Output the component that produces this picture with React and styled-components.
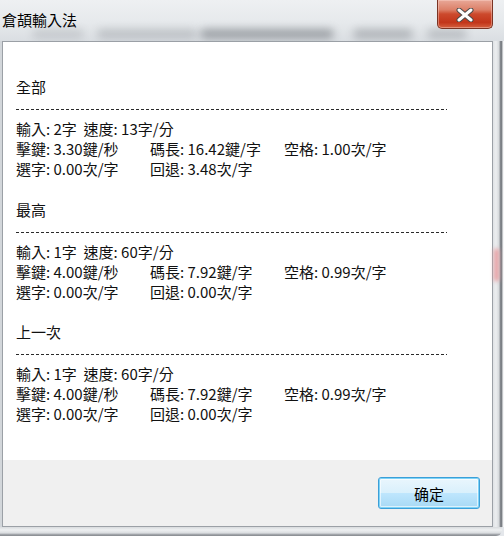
import styled, { createGlobalStyle } from "styled-components";

const GlobalStyle = createGlobalStyle`
  html, body {
    margin: 0;
    padding: 0;
    background: #e4e7eb;
  }
  * {
    box-sizing: border-box;
  }
`;

const sections = [
  {
    title: "全部",
    input: "輸入: 2字  速度: 13字/分",
    keys: "擊鍵: 3.30鍵/秒",
    length: "碼長: 16.42鍵/字",
    space: "空格: 1.00次/字",
    select: "選字: 0.00次/字",
    back: "回退: 3.48次/字",
  },
  {
    title: "最高",
    input: "輸入: 1字  速度: 60字/分",
    keys: "擊鍵: 4.00鍵/秒",
    length: "碼長: 7.92鍵/字",
    space: "空格: 0.99次/字",
    select: "選字: 0.00次/字",
    back: "回退: 0.00次/字",
  },
  {
    title: "上一次",
    input: "輸入: 1字  速度: 60字/分",
    keys: "擊鍵: 4.00鍵/秒",
    length: "碼長: 7.92鍵/字",
    space: "空格: 0.99次/字",
    select: "選字: 0.00次/字",
    back: "回退: 0.00次/字",
  },
];

// blurred taskbar/window text seen through the glass title bar
const blurs = [
  { left: 32, width: 52, tone: 0.15 },
  { left: 97, width: 100, tone: 0.2 },
  { left: 200, width: 134, tone: 0.4 },
  { left: 353, width: 60, tone: 0.28 },
  { left: 427, width: 40, tone: 0.22 },
];

export default function App() {
  return (
    <>
      <GlobalStyle />
      <Window>
        <TitleBar>
          {blurs.map((b) => (
            <Blur
              key={b.left}
              style={{ left: b.left, width: b.width, opacity: b.tone }}
            />
          ))}
          <Title>倉頡輸入法</Title>
          <CloseButton aria-label="close">
            <svg width="20" height="14" viewBox="0 0 20 14">
              <path
                d="M4 2 L16 12 M16 2 L4 12"
                stroke="#4a4a4a"
                strokeWidth="5"
                strokeLinecap="round"
              />
              <path
                d="M4 2 L16 12 M16 2 L4 12"
                stroke="#ffffff"
                strokeWidth="3"
                strokeLinecap="round"
              />
            </svg>
          </CloseButton>
        </TitleBar>
        <Middle>
          <LeftFrame />
          <Client>
            <Content>
              {sections.map((s) => (
                <Section key={s.title}>
                  <Heading>{s.title}</Heading>
                  <Rule />
                  <Stats>
                    <Wide>{s.input}</Wide>
                    <span>{s.keys}</span>
                    <span>{s.length}</span>
                    <span>{s.space}</span>
                    <span>{s.select}</span>
                    <span>{s.back}</span>
                  </Stats>
                </Section>
              ))}
            </Content>
            <Footer>
              <OkButton>确定</OkButton>
            </Footer>
          </Client>
          <RightFrame />
        </Middle>
        <BottomFrame />
      </Window>
    </>
  );
}

const Window = styled.div`
  width: 504px;
  height: 536px;
  display: flex;
  flex-direction: column;
  font-family: "Noto Sans CJK TC", "Noto Sans", sans-serif;
  color: #111;
  overflow: hidden;
`;

const TitleBar = styled.div`
  position: relative;
  height: 41px;
  display: flex;
  align-items: flex-start;
  justify-content: space-between;
  background: linear-gradient(180deg, #eef0f2 0%, #e6e9ec 55%, #dadee2 100%);
  overflow: hidden;
`;

const Blur = styled.div`
  position: absolute;
  top: 29px;
  height: 10px;
  background: #3a3f46;
  border-radius: 5px;
  filter: blur(4px);
`;

const Title = styled.div`
  position: relative;
  margin-top: 10px;
  padding-left: 2px;
  font-size: 15px;
  line-height: 20px;
  color: #000;
`;

const CloseButton = styled.div`
  position: relative;
  width: 56px;
  height: 29px;
  margin-right: 11px;
  display: flex;
  align-items: center;
  justify-content: center;
  border: 1px solid #7a3323;
  border-top: none;
  border-radius: 0 0 5px 5px;
  background: linear-gradient(
    180deg,
    #e8a898 0%,
    #dc8068 35%,
    #cc4a2d 50%,
    #c2351a 80%,
    #d5603f 100%
  );
  box-shadow: inset 0 0 0 1px rgba(255, 220, 210, 0.4);

  svg {
    margin-top: 2px;
  }
`;

const Middle = styled.div`
  display: flex;
  height: 486px;
`;

const LeftFrame = styled.div`
  width: 2px;
  background: #d2d6da;
`;

const RightFrame = styled.div`
  position: relative;
  width: 11px;
  background: linear-gradient(
    90deg,
    #dfe2e5 0px,
    #eceef0 3px,
    #d6d9dc 6px,
    #9a9ea3 7px,
    #6b6f75 8px,
    #8c9095 9px,
    #f4f5f6 10px
  );

  &::after {
    content: "";
    position: absolute;
    left: 1px;
    top: 208px;
    width: 5px;
    height: 32px;
    background: #e89a9e;
    filter: blur(2px);
  }
`;

const BottomFrame = styled.div`
  height: 9px;
  margin-right: 2px;
  border-radius: 0 0 6px 0;
  background: linear-gradient(180deg, #d8dbde 0px, #eef0f1 3px, #dadde0 6px, #8e9297 8px);
`;

const Client = styled.div`
  width: 491px;
  display: flex;
  flex-direction: column;
  border: 1px solid #9ba0a6;
  background: #ffffff;
`;

const Content = styled.div`
  flex: 1;
  padding: 35px 0 0 13px;
  font-size: 15px;
  line-height: 20px;
`;

const Section = styled.div`
  margin-bottom: 20.5px;
`;

const Heading = styled.div`
  height: 20px;
`;

const Rule = styled.div`
  width: 431px;
  height: 1px;
  margin: 12px 0 9px;
  background: repeating-linear-gradient(
    90deg,
    #2a2a2a 0px,
    #2a2a2a 3px,
    transparent 3px,
    transparent 5px
  );
`;

const Stats = styled.div`
  display: grid;
  grid-template-columns: 134px 134px auto;
  white-space: pre;
`;

const Wide = styled.span`
  grid-column: 1 / -1;
`;

const Footer = styled.div`
  height: 66px;
  display: flex;
  align-items: center;
  justify-content: flex-end;
  padding-right: 12px;
  background: #f0f0f0;
`;

const OkButton = styled.button`
  width: 102px;
  height: 32px;
  padding: 0;
  font-family: "Noto Sans CJK SC", "Noto Sans CJK TC", sans-serif;
  font-size: 15px;
  color: #000;
  border: 1px solid #3c9fd8;
  border-radius: 3px;
  background: linear-gradient(180deg, #eaf6fd 0%, #d9f0fc 50%, #bee6fd 51%, #a7d9f5 100%);
  box-shadow: inset 0 0 0 1px #7ed3f7, inset 0 0 0 2px rgba(255, 255, 255, 0.6);
  cursor: pointer;
`;
